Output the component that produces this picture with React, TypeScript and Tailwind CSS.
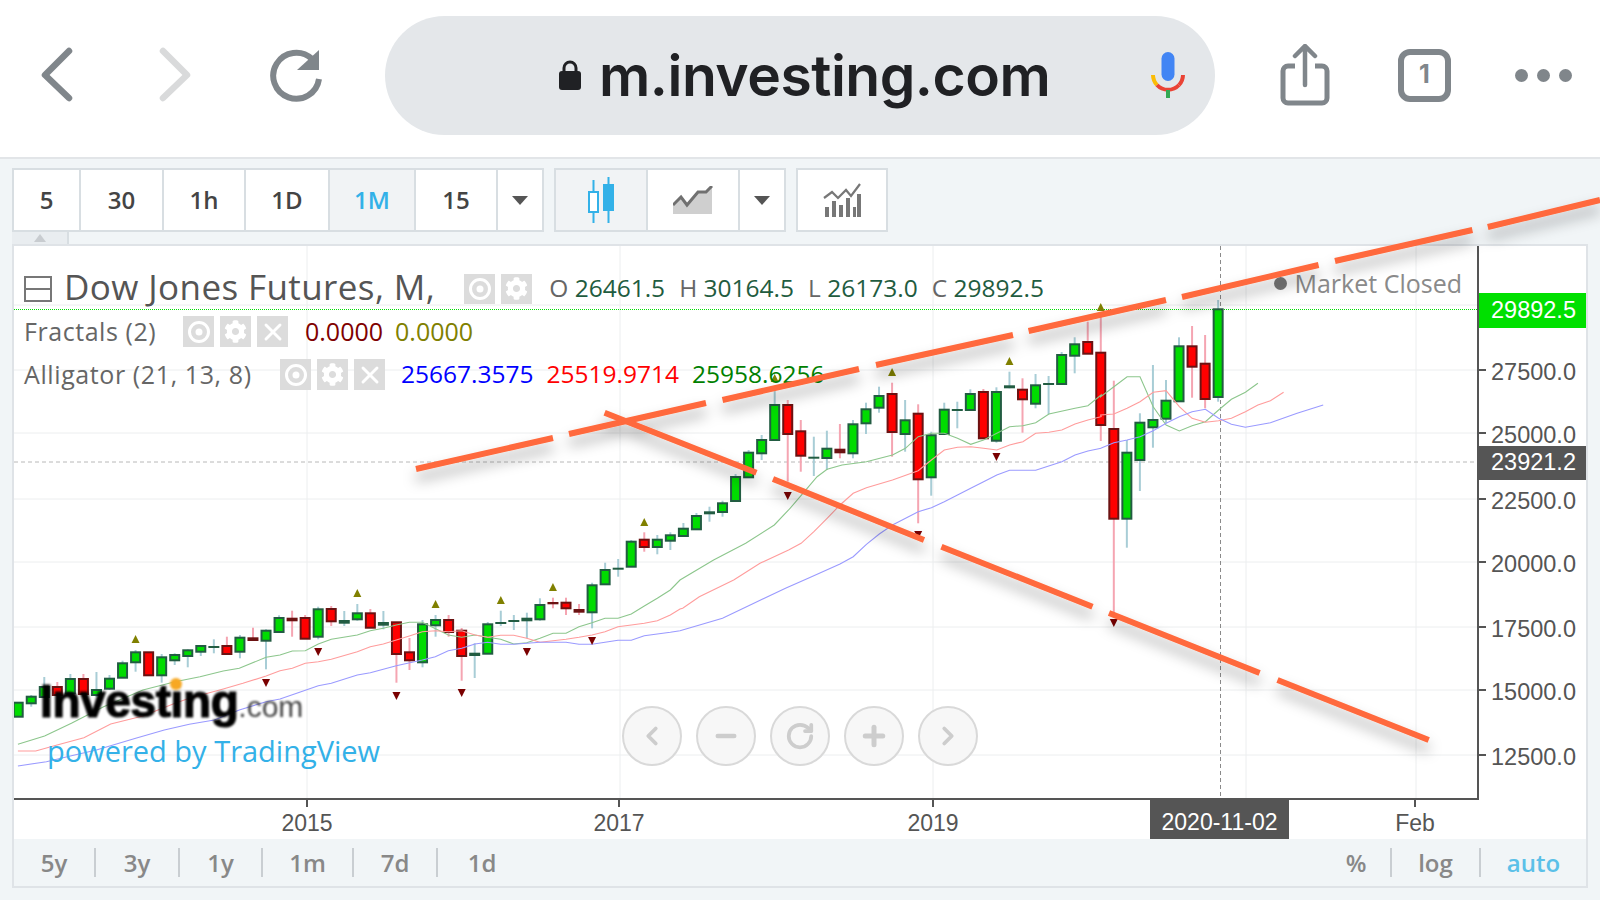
import { ChevronLeft, ChevronRight, Minus, Plus, RotateCw, X } from "lucide-react";
import { FaCog } from "react-icons/fa";

type C = ["g" | "r", number, number, number, number];
const candles: C[] = [
  ["g",702.7,716.7,702.7,716.7],["g",696.7,703.3,695,706.7],["g",687,697,677,698],["r",687,695,682,697],["g",679,693.3,674,695],["r",679,694,674,697],["g",690,695,672,697],["g",678.7,688.7,675,690],["g",663.3,677.7,660.7,678],["g",652.3,662.3,650,671.7],
  ["r",652.3,675.3,652.3,675.3],["g",657.3,675.3,654,682.7],["g",655,660.3,653.3,665],["g",650.3,656,649.3,667.3],["g",646,651.7,645,656],["g",646,647.3,639.3,653.3],["r",646,654,636.7,654],["g",637.7,651.7,635,658.3],["r",637.3,641,627.7,641],["g",630.7,640.7,629.3,669.3],
  ["g",618,632,615.3,632.7],["r",617.7,621.3,610.7,636.7],["r",618,638.7,615,638.7],["g",609.3,636.7,606.7,639.3],["r",609,621.3,606,626],["g",620,623.7,611,626],["g",613.3,619.3,604,620.7],["r",613.3,627.7,609,627.7],["g",622,625.7,611,629.3],["r",622.3,654,622,682.7],
  ["r",652.3,660.3,638,670],["g",624.3,662.3,620,667.3],["g",620,625.3,615,636.7],["r",620,632,615,636.7],["r",630.7,656,628,680.7],["g",652.7,656,643.3,678],["g",624.3,653.7,622,654],["g",622,623.3,610.7,626],["g",620,621.3,615,630],["g",617.7,621.3,612.7,638.3],
  ["g",605,619.3,598.3,620.7],["r",602,604.3,597.7,608.3],["r",602.7,608.3,597.7,615],["r",609,612.7,604,615],["g",585.3,612.3,582.7,628.3],["g",570,584.3,562.7,585],["g",567.7,569.3,559,576.7],["g",541.7,566.7,540,566.7],["r",539.7,547,532.3,551.7],["g",539.7,547,535,554.3],
  ["g",535.3,540.7,532.3,550],["g",528.7,536,523,536],["g",516,529.3,513,530],["g",511.3,514.3,506.7,521.7],["g",503.3,512,500.7,516.7],["g",477,501,474,501],["g",452.7,477.3,450,477],["g",440,453.3,435,460],["g",405,440,386.7,440],["r",405,434,400,481.7],
  ["r",431.3,455.7,420,471.7],["g",456.7,458,436.7,476],["g",448.7,458,430.7,470],["r",448.7,453.3,424,458.3],["g",424.3,453.3,420,458.3],["g",409.3,423.3,402.7,434],["g",396,407.7,386.7,412.7],["r",394,432,382.7,456.7],["g",420.3,434,400,451.7],["r",413.7,479.3,404.3,523.3],
  ["g",435.3,477.3,431.7,495.7],["g",409.7,434,402.7,434],["g",409,410.3,401.7,428.3],["g",394,410,389.3,410],["r",392,438.3,389,438.3],["g",392,440.7,387.3,442.7],["g",385.3,388.3,371.7,388.3],["r",389.7,399.3,378.3,432.7],["g",385.3,403.7,374,408.3],["g",383,384,376,414.3],
  ["g",355,384,352,384],["g",344.3,355.7,337.3,373.3],["r",342,353.7,321.7,353.7],["r",352.7,425,316.7,441],["r",429,518.7,380.7,613],["g",452.7,518.7,440,547.7],["g",422.7,460,413.3,491],["g",420,427.3,365,447.7],["g",400.7,418.7,380,423.3],["g",346.3,401.3,337.3,401.3],
  ["r",346.3,366.7,326,397.7],["r",363.7,399,335,408.3],["g",309.3,397,300,401.7],
];
const cx = (i: number) => 18.2 + 13.043 * i;
const ups: [number, number][] = [[9,639],[26,593],[32,604],[37,600],[41,587],[48,522],[58,378],[67,372],[76,361],[83,307]];
const downs: [number, number][] = [[19,683],[23,652],[29,696],[34,693],[39,652],[44,641],[59,496],[69,535],[75,457],[84,623]];

const map = (pts: number[], fx: (x: number) => number, oy: number) => {
  const out: string[] = [];
  for (let i = 0; i < pts.length; i += 2) out.push(`${fx(pts[i]).toFixed(1)},${(oy + pts[i + 1] / 3).toFixed(1)}`);
  return out;
};
const z4 = (p: number[]) => map(p, (x) => x / 2.8, 590);
const z8 = (p: number[]) => map(p, (x) => 280 + x / 3, 500);
const z5 = (p: number[]) => map(p, (x) => 560 + x / 2.8, 260);
const z6 = (p: number[]) => map(p, (x) => 1040 + x / 2.8, 260);
const z7 = (p: number[]) => map(p, (x) => 560 + x / 1.508, 580);

const greenLine = [
  ...z4([50,463,125,438,200,400,290,350,400,300,490,275,560,260,625,243,670,235,745,202]),
  ...z8([0,465,37,453,76,452,115,432,154,418,232,405,271,392,310,385,349,375,388,367,427,367,505,405,545,412,585,405,623,412,662,418,701,432,740,428,780,415,819,400,858,400,897,380,936,368,975,355,1014,355,1054,342,1093,318,1132,295,1171,270,1200,240]),
  ...z5([430,900,520,850,600,795,640,750,680,700,720,650,748,628,790,615,858,605,931,585,967,565,1003,530,1040,520,1076,520,1113,535,1150,553,1186,540,1223,520,1259,500,1296,497,1332,488,1369,462,1442,445,1478,437,1515,405]),
  ...z6([170,410,207,380,244,350,280,350,317,440,353,495,390,513,426,497,463,485,500,450,536,418,575,397,610,370]),
].join(" ");
const redLine = [
  ...z4([50,483,100,483,160,465,235,443,310,402,400,378,490,340,530,325,625,297,680,280,745,258]),
  ...z8([0,512,37,505,76,490,115,485,154,478,232,455,271,440,310,432,349,420,388,408,427,395,466,392,505,395,545,392,585,405,623,412,662,406,701,406,740,415,780,427,819,422,858,418,897,412,936,405,975,395,1014,380,1054,375,1093,370,1132,362,1171,345,1200,327]),
  ...z7([185,85,210,50,262,0]),
  ...z5([560,910,640,870,675,850,711,815,748,775,784,735,821,700,858,683,931,660,1003,632,1040,600,1076,570,1113,562,1150,560,1186,565,1223,570,1259,555,1296,545,1332,520,1369,517,1405,510,1442,492,1478,480,1515,470]),
  ...z6([170,465,207,462,244,445,280,425,317,397,353,392,390,440,426,475,463,487,500,482,536,475,575,455,610,435,645,422,682,397]),
].join(" ");
const blueLine = [
  ...z4([50,528,130,515,200,497,270,480,380,445,460,420,530,403,600,390,670,360,745,335]),
  ...z8([0,597,50,580,115,557,154,550,232,525,271,518,349,497,427,480,466,470,505,452,545,445,585,432,623,427,662,433,701,433,780,427,858,427,897,433,936,433,1014,421,1054,421,1093,407,1171,397,1200,392]),
  ...z7([245,115,290,72,340,25]),
  ...z5([695,955,784,912,821,890,858,853,894,822,931,795,1003,755,1040,743,1076,725,1113,705,1150,685,1186,665,1223,645,1259,631,1332,631,1405,605,1442,585,1478,573,1515,565]),
  ...z6([170,565,207,548,244,540,280,530,317,512,353,490,390,470,426,455,463,448,500,475,536,493,575,502,645,488,720,460,793,435]),
].join(" ");

const segs = [
  [416,469,553,438],[569,434,706,403],[722.5,400,859,369],[876,365,1013,335],[1028.6,331,1166,300],[1182,297,1318.6,265],[1335,261,1472.4,230],[1487.8,227,1600,200],
  [604.6,412.7,756.4,472.7],[773,479,924,540],[941.4,546.7,1092.5,606.7],[1109,613,1259.6,673],[1277.5,680,1428.7,740],
];
const prices: [string, number][] = [["27500.0",370],["25000.0",433],["22500.0",499],["20000.0",562],["17500.0",627],["15000.0",690],["12500.0",755]];
const gridX = [307, 620, 933, 1246, 1416];
const gridY = [305, 370, 433, 499, 562, 627, 690, 755];
const years: [string, number][] = [["2015",307],["2017",619],["2019",933],["Feb",1415]];

const Cell = ({ w, active, children }: { w: string; active?: boolean; children: React.ReactNode }) => (
  <div className={`${w} h-full flex items-center justify-center border-r-2 border-[#d8dee2] last:border-r-0 ${active ? "bg-[#f1f3f5]" : "bg-white"}`}>{children}</div>
);
const Caret = () => (
  <svg width="18" height="9" viewBox="0 0 18 9"><path d="M1 0h16L9 9z" fill="#555" /></svg>
);
const IBtn = ({ kind, className }: { kind: "eye" | "gear" | "x"; className: string }) => (
  <div className={`${className} w-[31px] bg-[#dcdcdc] flex items-center justify-center shrink-0`}>
    {kind === "eye" && (
      <svg width="24" height="24" viewBox="0 0 24 24"><circle cx="12" cy="12" r="9.5" fill="none" stroke="#fff" strokeWidth="3" /><circle cx="12" cy="12" r="3.5" fill="#fff" /></svg>
    )}
    {kind === "gear" && <FaCog size={23} color="#fff" />}
    {kind === "x" && <X size={28} color="#fff" strokeWidth={2.5} />}
  </div>
);
const Range = ({ w, children, sep = true }: { w: string; children: React.ReactNode; sep?: boolean }) => (
  <div className={`${w} h-[29px] flex items-center justify-center ${sep ? "border-r-2 border-[#c9ced2]" : ""}`}>{children}</div>
);
const RoundBtn = ({ children }: { children: React.ReactNode }) => (
  <div className="w-[60px] h-[60px] rounded-full bg-[#f7f7f7] border-2 border-[#d9d9d9] flex items-center justify-center text-[#cdcdcd]">{children}</div>
);

export default function App() {
  return (
    <div className="relative w-[1600px] h-[900px] overflow-hidden bg-[#f1f5f7] font-['Open_Sans',sans-serif]">
      {/* Browser bar */}
      <header className="h-[157px] pb-[7px] bg-white flex items-center">
        <svg className="ml-[40px] shrink-0" width="34" height="56" viewBox="0 0 34 56"><path d="M29 4 5 28l24 23" fill="none" stroke="#80868b" strokeWidth="6.5" strokeLinecap="round" strokeLinejoin="round" /></svg>
        <svg className="ml-[84px] shrink-0" width="34" height="56" viewBox="0 0 34 56"><path d="M5 4l24 24L5 51" fill="none" stroke="#d9dadb" strokeWidth="6.5" strokeLinecap="round" strokeLinejoin="round" /></svg>
        <svg className="ml-[78px] shrink-0" width="54" height="56" viewBox="0 0 54 56"><path d="M42 12A23 23 0 1 0 49 32" fill="none" stroke="#80868b" strokeWidth="6" /><path d="M49 3v20H27z" fill="#80868b" /></svg>
        <div className="ml-[61px] w-[830px] h-[119px] rounded-[60px] bg-[#e4e7ea] flex items-center shrink-0">
          <svg className="ml-[173px] shrink-0" width="24" height="30" viewBox="0 0 24 30"><path d="M6 12V8a6 6 0 0 1 12 0v4" fill="none" stroke="#202124" strokeWidth="3" /><rect x="1" y="11" width="22" height="19" rx="3" fill="#202124" /></svg>
          <span className="ml-[17px] text-[57px] leading-none font-semibold text-[#202124] tracking-[-0.5px] font-['Inter',sans-serif]">m.investing.com</span>
          <svg className="ml-auto mr-[30px] shrink-0" width="34" height="46" viewBox="0 0 34 46">
            <rect x="10.5" y="0" width="13" height="29" rx="6.5" fill="#4285f4" />
            <path d="M2 23a15 15 0 0 0 4 10" stroke="#fbbc05" strokeWidth="4" fill="none" />
            <path d="M6 33a15 15 0 0 0 22 0" stroke="#ea4335" strokeWidth="4" fill="none" />
            <path d="M28 33a15 15 0 0 0 4-10" stroke="#ea4335" strokeWidth="4" fill="none" />
            <rect x="15" y="38" width="4" height="8" fill="#34a853" />
          </svg>
        </div>
        <svg className="ml-[65px] shrink-0" width="50" height="62" viewBox="0 0 50 62"><path d="M15 22H8a5 5 0 0 0-5 5v27a5 5 0 0 0 5 5h34a5 5 0 0 0 5-5V27a5 5 0 0 0-5-5h-7" fill="none" stroke="#80868b" strokeWidth="5" /><path d="M25 41V3M15 12l10-10 10 10" fill="none" stroke="#80868b" strokeWidth="4.5" strokeLinecap="round" /></svg>
        <div className="ml-[68px] w-[53px] h-[53px] rounded-[12px] border-[6px] border-[#80868b] flex items-center justify-center text-[25px] font-bold text-[#80868b] font-['Inter',sans-serif] shrink-0">1</div>
        <div className="ml-[64px] flex gap-[9px] shrink-0">
          <div className="w-[13px] h-[13px] rounded-full bg-[#80868b]" />
          <div className="w-[13px] h-[13px] rounded-full bg-[#80868b]" />
          <div className="w-[13px] h-[13px] rounded-full bg-[#80868b]" />
        </div>
      </header>
      <div className="h-[2px] bg-[#e2e5e8]" />

      {/* Toolbar */}
      <div className="flex h-[64px] mt-[9px] ml-[12px] gap-[10px] text-[24px] font-semibold text-[#444]">
        <div className="flex h-full border-2 border-[#d8dee2] bg-white">
          <Cell w="w-[67px]">5</Cell>
          <Cell w="w-[83px]">30</Cell>
          <Cell w="w-[82px]">1h</Cell>
          <Cell w="w-[84px]">1D</Cell>
          <Cell w="w-[86px]" active><span className="text-[#33b1e8]">1M</span></Cell>
          <Cell w="w-[82px]">15</Cell>
          <Cell w="w-[44px]"><Caret /></Cell>
        </div>
        <div className="flex h-full border-2 border-[#d8dee2] bg-white">
          <Cell w="w-[92px]" active>
            <svg width="26" height="46" viewBox="0 0 26 46">
              <path d="M5.5 3v43M20.5 0v46" stroke="#33b1e8" strokeWidth="2" />
              <rect x="1" y="15" width="9" height="20" fill="#fff" stroke="#33b1e8" strokeWidth="2" />
              <rect x="15" y="7" width="11" height="27" fill="#33b1e8" />
            </svg>
          </Cell>
          <Cell w="w-[92px]">
            <svg width="40" height="28" viewBox="0 0 40 28"><path d="M0 19l8-8 6 8 11-13h8l6-6v28H0z" fill="#cfcfcf" /><path d="M0 19l8-8 6 8 11-13h8l6-6" fill="none" stroke="#707070" strokeWidth="3" /></svg>
          </Cell>
          <Cell w="w-[44px]"><Caret /></Cell>
        </div>
        <div className="flex h-full border-2 border-[#d8dee2] bg-white">
          <Cell w="w-[88px]">
            <svg width="38" height="34" viewBox="0 0 38 34">
              <path d="M1 15l8-6 6 6 8-8 5 6 9-12" fill="none" stroke="#777" strokeWidth="2.2" />
              <path d="M2 24h4v10H2zM9 18h4v16H9zM16 22h4v12h-4zM23 15h4v19h-4zM30 24h3v10h-3zM34 11h4v23h-4z" fill="#777" />
            </svg>
          </Cell>
        </div>
      </div>

      {/* Little tab */}
      <div className="ml-[12px] w-[57px] h-[12px] bg-[#e9edf0] border-r-2 border-[#d8dee2] flex items-center justify-center">
        <svg width="12" height="8" viewBox="0 0 12 8"><path d="M0 8l6-8 6 8z" fill="#c8ccd0" /></svg>
      </div>

      {/* Chart panel */}
      <div className="ml-[12px] w-[1576px] h-[644px] border-x-2 border-y-2 border-[#dfe3e7] bg-white flex flex-col">
        <div className="flex h-[554px] relative">
          <div className="relative w-[1465px] h-full border-r-2 border-b-2 border-[#555]">
            <svg className="absolute left-0 top-0" width="1463" height="552" viewBox="14 246 1463 552">
              {gridX.map((x) => <line key={x} x1={x} x2={x} y1="246" y2="798" stroke="#eceeef" strokeWidth="1" />)}
              {gridY.map((y) => <line key={y} x1="14" x2="1477" y1={y} y2={y} stroke="#eceeef" strokeWidth="1" />)}
              <line x1="14" x2="1477" y1="309.5" y2="309.5" stroke="#00dd00" strokeWidth="1" strokeDasharray="1 1" />
              <line x1="14" x2="1477" y1="462" y2="462" stroke="#b8b8b8" strokeWidth="1" strokeDasharray="4 3" />
              <line x1="1220.5" x2="1220.5" y1="246" y2="798" stroke="#8a8a8a" strokeWidth="1" strokeDasharray="4 3" />
              {candles.map((c, i) => {
                const x = cx(i);
                const doji = c[2] - c[1] < 5;
                const dark = c[0] === "g" ? "#225c42" : "#6b1212";
                const fill = c[0] === "g" ? "#00dc00" : "#ff0000";
                const wick = c[0] === "g" ? "#a8cdd6" : "#f5a5b2";
                return (
                  <g key={i}>
                    <line x1={x} x2={x} y1={c[3]} y2={c[4]} stroke={wick} strokeWidth="2" />
                    {doji ? (
                      <rect x={x - 5.5} y={c[1]} width="11" height={Math.max(c[2] - c[1], 2)} fill={dark} />
                    ) : (
                      <rect x={x - 4.5} y={c[1]} width="9" height={c[2] - c[1]} fill={fill} stroke={dark} strokeWidth="2" />
                    )}
                  </g>
                );
              })}
              <polyline points={greenLine} fill="none" stroke="#8cc68c" strokeWidth="1.1" />
              <polyline points={redLine} fill="none" stroke="#ff9c9c" strokeWidth="1.1" />
              <polyline points={blueLine} fill="none" stroke="#9a9aff" strokeWidth="1.1" />
              {ups.map(([i, y]) => <path key={i} d={`M${cx(i) - 4} ${y + 4}h8l-4 -8z`} fill="#808000" />)}
              {downs.map(([i, y]) => <path key={i} d={`M${cx(i) - 4} ${y - 4}h8l-4 8z`} fill="#7a0000" />)}
            </svg>

            {/* Legend */}
            <div className="absolute left-[10px] top-[27px] flex items-center h-[31px] whitespace-nowrap">
              <div className="w-[28px] h-[26px] border-2 border-[#777] flex items-center justify-center shrink-0"><div className="w-full h-[2px] bg-[#777]" /></div>
              <span className="ml-[12px] mb-[5px] text-[35px] leading-none text-[#555] tracking-[0.4px]">Dow Jones Futures, M,</span>
              <IBtn kind="eye" className="ml-[29px] h-[30px]" />
              <IBtn kind="gear" className="ml-[6px] h-[30px]" />
              <div className="ml-[17px] flex text-[24.5px] leading-none gap-[14px]">
                <span className="text-[#666]">O <span className="text-[#1f5c40]">26461.5</span></span>
                <span className="text-[#666]">H <span className="text-[#1f5c40]">30164.5</span></span>
                <span className="text-[#666]">L <span className="text-[#1f5c40]">26173.0</span></span>
                <span className="text-[#666]">C <span className="text-[#1f5c40]">29892.5</span></span>
              </div>
            </div>
            <div className="absolute left-[10px] top-[70px] flex items-center h-[31px] whitespace-nowrap text-[25px] leading-none">
              <span className="text-[#666] w-[159px] tracking-[0.55px]">Fractals (2)</span>
              <IBtn kind="eye" className="h-[31px]" />
              <IBtn kind="gear" className="ml-[6px] h-[31px]" />
              <IBtn kind="x" className="ml-[6px] h-[31px]" />
              <span className="ml-[17px] text-[#800000]">0.0000</span>
              <span className="ml-[12px] text-[#808000]">0.0000</span>
            </div>
            <div className="absolute left-[10px] top-[113px] flex items-center h-[31px] whitespace-nowrap text-[25px] leading-none">
              <span className="text-[#666] w-[256px] tracking-[0.6px]">Alligator (21, 13, 8)</span>
              <IBtn kind="eye" className="h-[31px]" />
              <IBtn kind="gear" className="ml-[6px] h-[31px]" />
              <IBtn kind="x" className="ml-[6px] h-[31px]" />
              <span className="ml-[16px] text-[#0000ff] text-[24.5px]">25667.3575</span>
              <span className="ml-[13px] text-[#ff0000] text-[24.5px]">25519.9714</span>
              <span className="ml-[13px] text-[#008000] text-[24.5px]">25958.6256</span>
            </div>
            <div className="absolute right-[15px] top-[25px] flex items-center gap-[7px] text-[25px] leading-none text-[#8a8a8a] whitespace-nowrap">
              <div className="w-[13px] h-[13px] rounded-full bg-[#777]" />Market Closed
            </div>

            {/* Logo */}
            <div className="absolute left-[26px] top-[432px] flex items-baseline whitespace-nowrap font-['Liberation_Sans',sans-serif] blur-[0.8px]">
              <span className="text-[46px] leading-none font-bold text-black tracking-[-0.4px] [-webkit-text-stroke:1.2px_black]">Investing</span>
              <span className="text-[30px] leading-none text-[#444]">.com</span>
              <div className="absolute left-[130px] top-[0px] w-[12px] h-[12px] rounded-full bg-[#f7a823]" />
            </div>
            <div className="absolute left-[33px] top-[490px] text-[29px] leading-none text-[#33b1e8] whitespace-nowrap">powered by TradingView</div>

            {/* Zoom controls */}
            <div className="absolute left-[608px] top-[460px] flex gap-[14px]">
              <RoundBtn><ChevronLeft size={30} strokeWidth={3} /></RoundBtn>
              <RoundBtn><Minus size={28} strokeWidth={4} /></RoundBtn>
              <RoundBtn><RotateCw size={30} strokeWidth={3} /></RoundBtn>
              <RoundBtn><Plus size={30} strokeWidth={4} /></RoundBtn>
              <RoundBtn><ChevronRight size={30} strokeWidth={3} /></RoundBtn>
            </div>
          </div>

          {/* Price axis */}
          <div className="relative flex-1 font-['Liberation_Sans',sans-serif] text-[23.5px] leading-none text-[#555]">
            {prices.map(([t, y]) => (
              <div key={t} className="absolute left-0 right-0 flex items-center h-[30px]" style={{ top: y - 246 - 15 }}>
                <div className="w-[7px] h-[2px] bg-[#555]" />
                <span className="ml-[5px] mt-[5px]">{t}</span>
              </div>
            ))}
            <div className="absolute left-0 right-0 top-[47px] h-[35px] bg-[#00e000] text-white flex items-center pl-[12px]">29892.5</div>
            <div className="absolute left-0 right-0 top-[200px] h-[34px] bg-[#555] text-white flex items-center pl-[12px]">23921.2</div>
          </div>
        </div>

        {/* Time axis */}
        <div className="relative h-[39px] font-['Liberation_Sans',sans-serif] text-[23px] leading-none text-[#555]">
          {years.map(([t, x]) => (
            <div key={t} className="absolute top-0 h-full w-[80px] flex flex-col items-center" style={{ left: x - 14 - 40 }}>
              <div className="w-[2px] h-[7px] bg-[#555]" />
              <span className="mt-[5px]">{t}</span>
            </div>
          ))}
          <div className="absolute left-[1136px] top-0 w-[139px] h-full bg-[#555] text-white flex items-center justify-center pt-[6px]">2020-11-02</div>
        </div>

        {/* Range bar */}
        <div className="flex-1 bg-[#f1f5f7] flex items-center text-[24px] font-semibold text-[#888]">
          <Range w="w-[82px]">5y</Range>
          <Range w="w-[84px]">3y</Range>
          <Range w="w-[83px]">1y</Range>
          <Range w="w-[91px]">1m</Range>
          <Range w="w-[84px]">7d</Range>
          <Range w="w-[88px]" sep={false}>1d</Range>
          <div className="ml-auto flex items-center">
            <Range w="w-[60px]"><span className="pr-[10px]">%</span></Range>
            <Range w="w-[89px]">log</Range>
            <Range w="w-[105px]" sep={false}><span className="text-[#5bc0e8]">auto</span></Range>
          </div>
        </div>
      </div>

      {/* Drawn trend lines */}
      <svg className="absolute left-0 top-0 pointer-events-none" width="1600" height="900" viewBox="0 0 1600 900">
        <defs>
          <filter id="sh" x="-10%" y="-30%" width="120%" height="180%">
            <feDropShadow dx="0" dy="9" stdDeviation="7" floodColor="#000" floodOpacity="0.35" />
          </filter>
        </defs>
        <g filter="url(#sh)">
          {segs.map((s, i) => <line key={i} x1={s[0]} y1={s[1]} x2={s[2]} y2={s[3]} stroke="#ff693c" strokeWidth="6" />)}
        </g>
      </svg>
    </div>
  );
}
